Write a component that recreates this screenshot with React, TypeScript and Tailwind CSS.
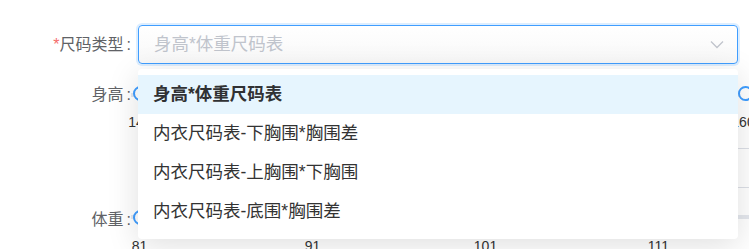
const heightMarks = ["140", "160"];
const weightMarks = ["81", "91", "101", "111"];

const options = [
  "身高*体重尺码表",
  "内衣尺码表-下胸围*胸围差",
  "内衣尺码表-上胸围*下胸围",
  "内衣尺码表-底围*胸围差",
];

function Handle({ className }: { className: string }) {
  return (
    <span
      className={`absolute w-[15px] h-[15px] rounded-full border-2 border-[#409eff] bg-white ${className}`}
    />
  );
}

function Label({ text, required }: { text: string; required?: boolean }) {
  return (
    <label className="w-[131px] self-center text-right text-[16px] text-[#606266]">
      {required && <span className="text-[#f56c6c]">*</span>}
      {text}
      <span className="pl-[3px]">:</span>
    </label>
  );
}

export default function App() {
  return (
    <div
      className="relative w-[749px] h-[249px] overflow-hidden bg-white"
      style={{ fontFamily: '"Liberation Sans", "Noto Sans CJK SC", sans-serif' }}
    >
      <div className="pt-[25px]">
        {/* 尺码类型 */}
        <div className="flex items-center h-[39px]">
          <Label text="尺码类型" required />
          <div className="ml-[7px] w-[600px] h-[39px] flex items-center justify-between pl-[15px] pr-[13px] rounded-[4px] border border-[#409eff] bg-gradient-to-b from-white to-[#f8f8f8] shadow-[0_0_0_2px_rgba(64,158,255,0.18)]">
            <span className="text-[17.5px] text-[#c0c4cc]">身高*体重尺码表</span>
            <svg width="14" height="9" viewBox="0 0 14 9" fill="none">
              <path d="M1 1.5 L7 7.5 L13 1.5" stroke="#c0c4cc" strokeWidth="1.3" />
            </svg>
          </div>
        </div>

        {/* 身高 */}
        <div className="flex items-center h-[28px] mt-[17px]">
          <Label text="身高" />
          <div className="relative flex-1 h-[4px] bg-[#e4e7ed]">
            <Handle className="left-[2px] -top-[7px]" />
            <Handle className="left-[607px] -top-[7px]" />
          </div>
        </div>
        <div className="flex justify-between w-[683px] ml-[100px] mt-[3px] h-[20px] text-[14px] leading-[20px] text-[#333]">
          {heightMarks.map((m) => (
            <span key={m} className="w-[80px] text-center">{m}</span>
          ))}
        </div>

        <div className="ml-[140px] mt-[16px] border-t border-[#dcdfe6]" />
        <div className="ml-[140px] mt-[38px] border-t border-[#dcdfe6]" />

        {/* 体重 */}
        <div className="flex h-[28px] mt-[18px]">
          <Label text="体重" />
          <div className="relative flex-1 h-[4px] mt-[9px] bg-[#e4e7ed]">
            <Handle className="left-[2px] -top-[5px]" />
          </div>
        </div>
        <div className="flex ml-[53px] mt-[2px] h-[20px] text-[14px] leading-[20px] text-[#333]">
          {weightMarks.map((m) => (
            <span key={m} className="w-[173px] shrink-0 text-center">{m}</span>
          ))}
        </div>
      </div>

      {/* dropdown */}
      <div className="absolute left-[138px] top-[69px] w-[600px] h-[170px] pt-[6px] rounded-[4px] bg-white shadow-[0_6px_32px_rgba(0,0,0,0.13)]">
        {options.map((o, i) => (
          <div
            key={o}
            className={`flex items-center h-[39px] px-[15px] text-[17.5px] ${
              i === 0 ? "bg-[#e6f5fe] font-bold text-[#303133]" : "text-[#333]"
            }`}
          >
            {o}
          </div>
        ))}
      </div>
    </div>
  );
}
